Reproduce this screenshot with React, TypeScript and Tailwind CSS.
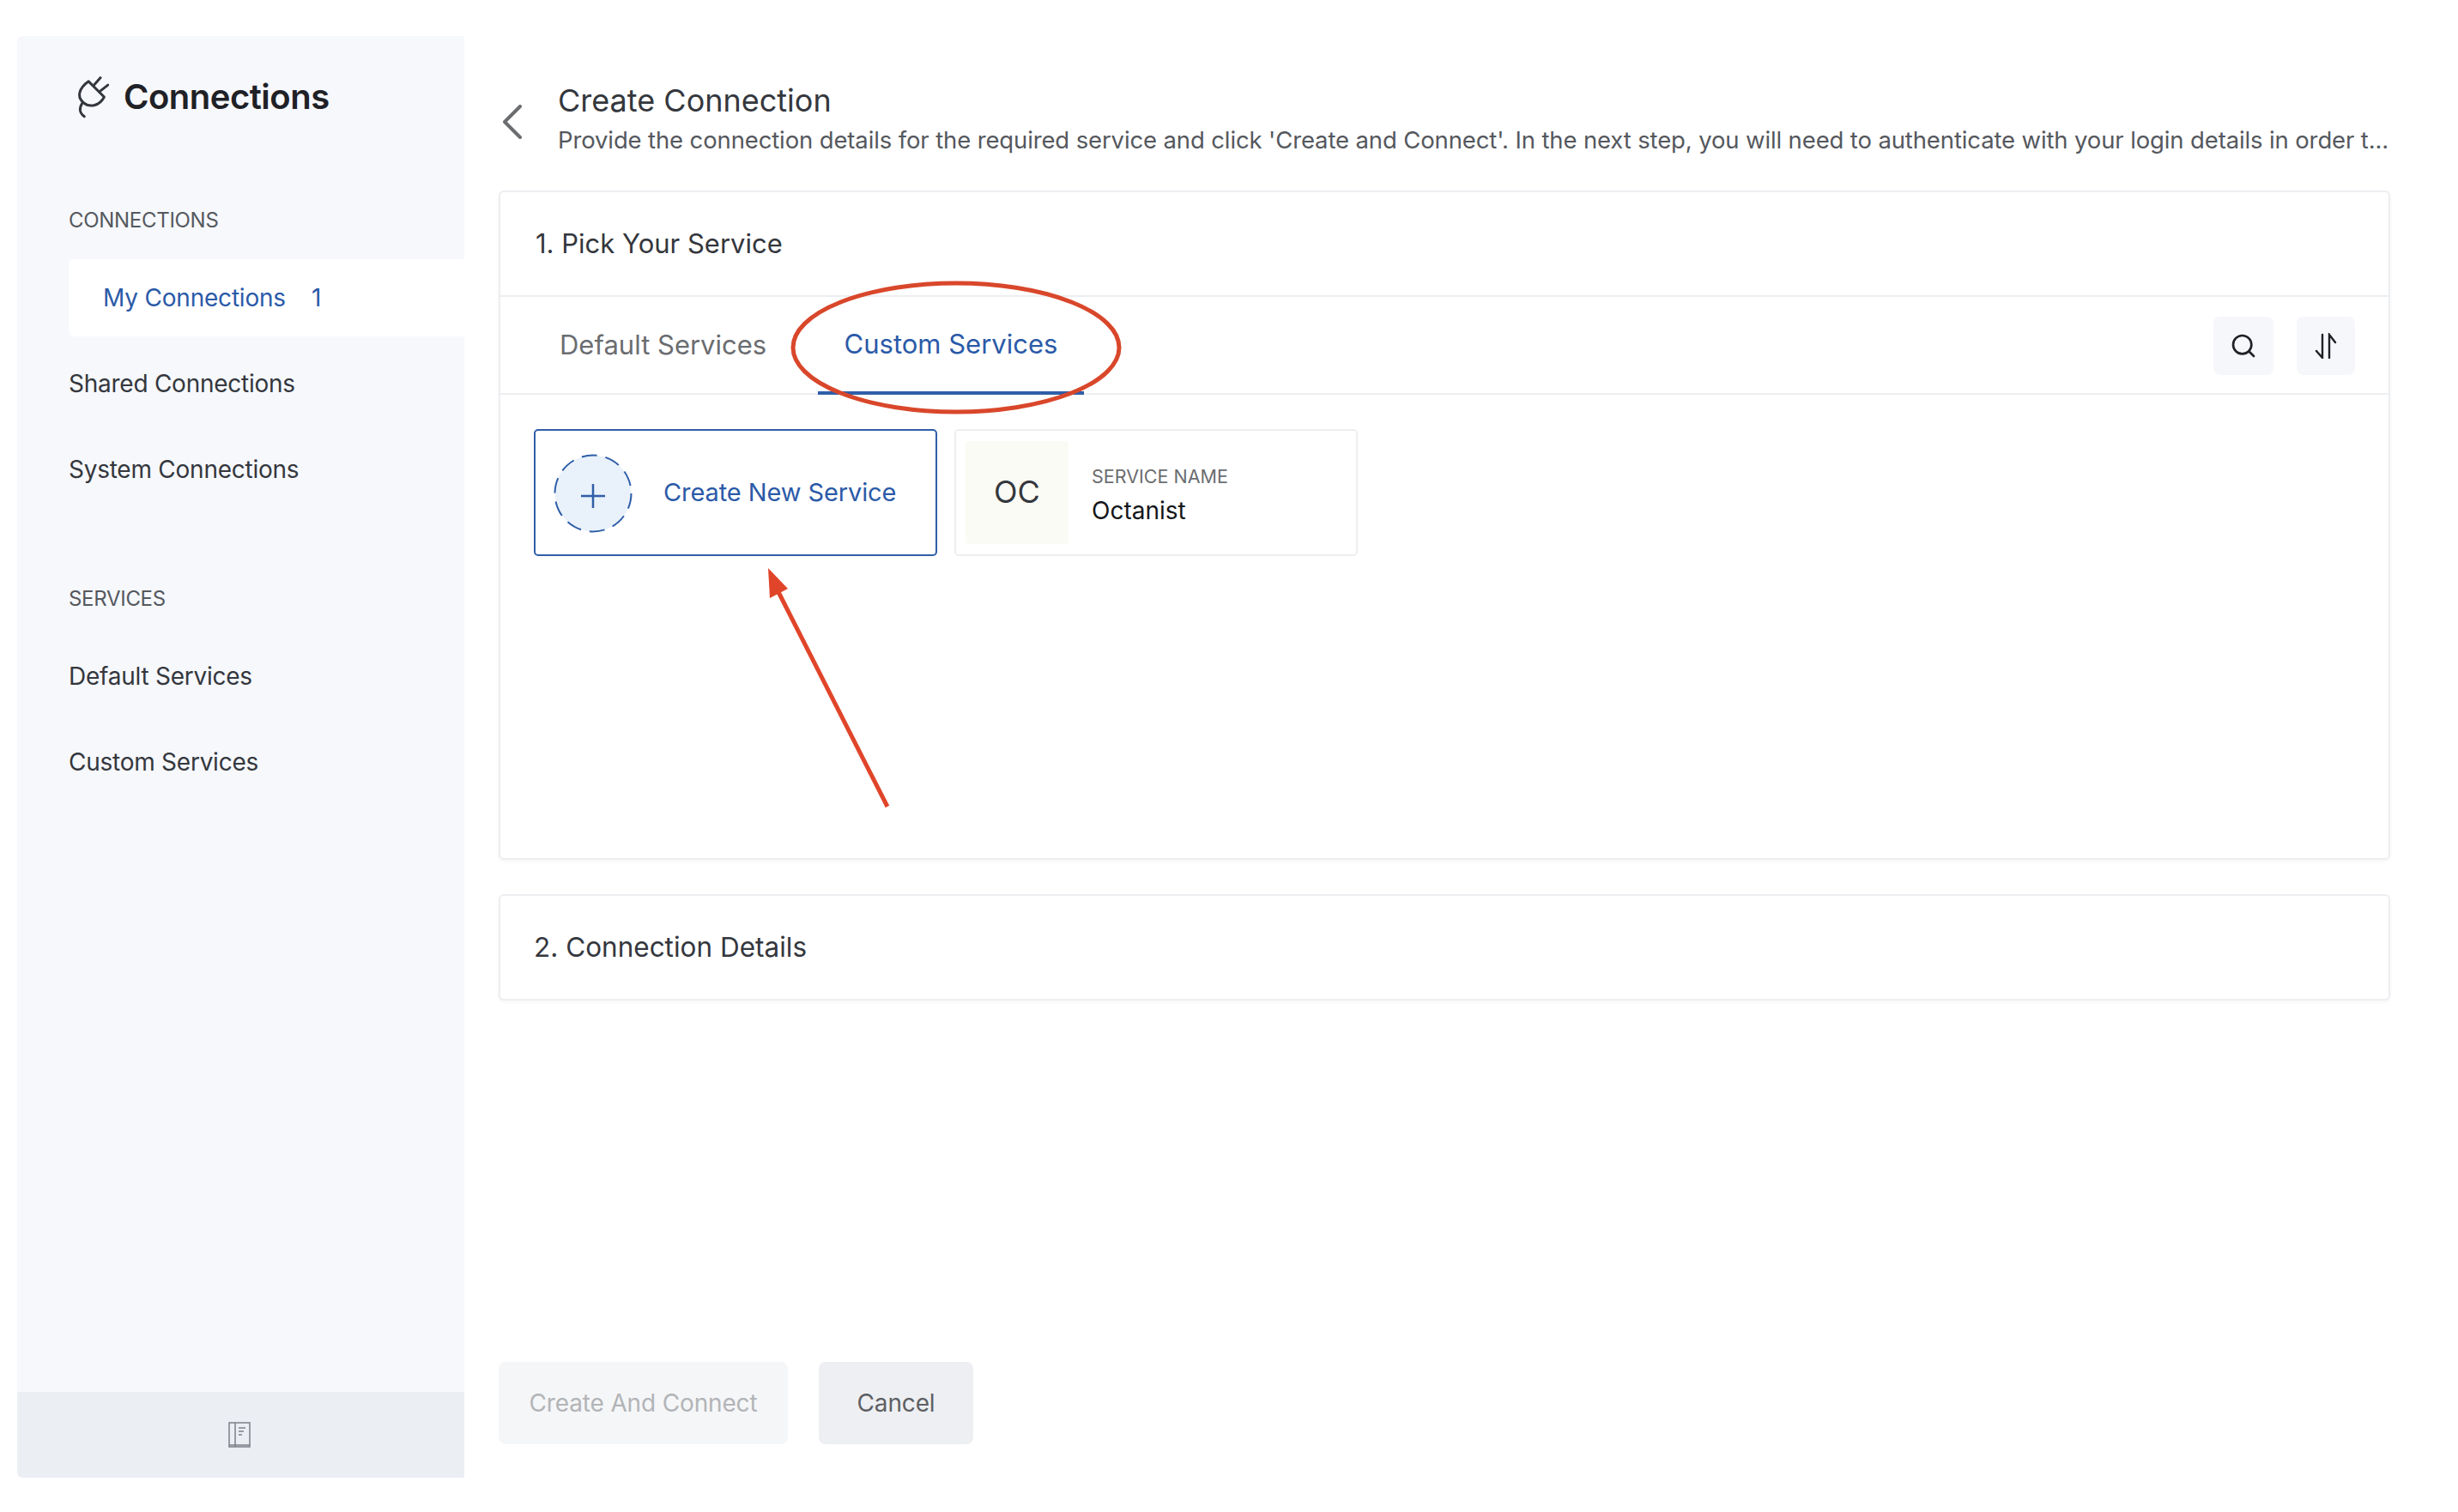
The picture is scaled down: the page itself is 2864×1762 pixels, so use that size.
import { Search } from 'lucide-react';

const font = { fontFamily: 'Inter, "Noto Sans", sans-serif' };

function PlugIcon() {
  return (
    <svg viewBox="90 80 115 150" className="w-[38px] h-[50px]" fill="none" stroke="#34373d" strokeWidth="9" strokeLinecap="round" strokeLinejoin="round">
      <path d="M130 100 L185 155 C170 185 135 195 112 175 C88 155 95 125 130 100 Z" />
      <path d="M150 112 L172 87 M170 135 L198 113" />
      <path d="M107 178 C96 195 98 212 115 224" />
    </svg>
  );
}

function SortIcon() {
  return (
    <svg viewBox="0 0 26 30" className="w-[26px] h-[30px]" fill="none" stroke="#1f2126" strokeWidth="2.4" strokeLinecap="round">
      <path d="M9 2 V29 L2 21" />
      <path d="M17 29 V2 L24 11" />
    </svg>
  );
}

function PanelIcon() {
  return (
    <svg viewBox="0 0 26 30" className="w-[26px] h-[30px] mr-[3px]" fill="none" stroke="#7d8187" strokeWidth="1.5">
      <rect x="1" y="1" width="24" height="28" />
      <path d="M8 1 V29 M1 27 H25" />
      <path d="M12 7 H20 M12 11 H18 M12 15 H16" />
    </svg>
  );
}

function DashedPlus() {
  return (
    <svg viewBox="0 0 92 92" className="w-[92px] h-[92px] mt-[2px]" fill="none" stroke="#2f5ea8">
      <circle cx="46" cy="46" r="44.5" fill="#e9f1fa" strokeWidth="2" strokeDasharray="18 10" />
      <path d="M46 35 V63 M32 49 H60" strokeWidth="2.5" />
    </svg>
  );
}

function SideItem({ label }: { label: string }) {
  return <div className="h-[100px] flex items-center pl-[60px] text-[28px] tracking-[-0.25px] text-[#34373d]">{label}</div>;
}

function SideHeading({ label }: { label: string }) {
  return <div className="pl-[60px] text-[24px] leading-[30px] tracking-[-0.3px] text-[#55585e]">{label}</div>;
}

function Sidebar() {
  return (
    <aside className="w-[521px] h-[1680px] shrink-0 bg-[#f6f8fc] rounded-tl-md rounded-bl-md flex flex-col">
      <div className="flex items-center gap-[16px] pl-[70px] pt-[22px] h-[120px]">
        <PlugIcon />
        <span className="text-[40px] font-semibold text-[#1f2126] tracking-[-0.5px]">Connections</span>
      </div>
      <div className="mt-[80px]">
        <SideHeading label="CONNECTIONS" />
      </div>
      <div className="ml-[60px] mt-[30px] h-[90px] bg-white rounded-l-md flex items-center pl-[40px] text-[28px] tracking-[-0.2px] text-[#2b5aa8]">
        <span>My Connections</span>
        <span className="ml-[30px]">1</span>
      </div>
      <div className="mt-[5px]">
        <SideItem label="Shared Connections" />
        <SideItem label="System Connections" />
      </div>
      <div className="mt-[86px] mb-[25px]">
        <SideHeading label="SERVICES" />
      </div>
      <SideItem label="Default Services" />
      <SideItem label="Custom Services" />
      <div className="mt-auto h-[100px] bg-[#ebeff4] rounded-bl-md flex items-center justify-center">
        <PanelIcon />
      </div>
    </aside>
  );
}

function Card({ children }: { children: React.ReactNode }) {
  return <section className="border-2 border-[#eceef1] rounded-md bg-white shadow-[0_2px_4px_rgba(0,0,0,0.04)]">{children}</section>;
}

function ServiceCards() {
  return (
    <div className="flex gap-[20px] px-[39px] pt-[40px]">
      <div className="w-[470px] h-[148px] border-2 border-[#2f5ea8] rounded-[5px] flex items-center pl-[21px]">
        <DashedPlus />
        <span className="ml-[36px] text-[29px] tracking-[-0.1px] text-[#2b5aa8]">Create New Service</span>
      </div>
      <div className="w-[470px] h-[148px] border-2 border-[#eceef1] rounded-[5px] flex items-center pl-[11px]">
        <div className="w-[120px] h-[120px] bg-[#fafbf4] rounded flex items-center justify-center text-[36px] text-[#34373d] pb-[2px]">OC</div>
        <div className="ml-[27px] flex flex-col pt-[3px]">
          <span className="text-[21.5px] leading-[30px] text-[#6b6d70]">SERVICE NAME</span>
          <span className="mt-[8px] text-[28px] leading-[34px] text-[#14161a]">Octanist</span>
        </div>
      </div>
    </div>
  );
}

function PickService() {
  return (
    <Card>
      <div className="h-[122px] flex items-center pl-[41px] text-[31px] text-[#34373d] border-b-2 border-[#eceef1]">1. Pick Your Service</div>
      <div className="h-[114px] flex items-stretch pl-[40px] pr-[39px] border-b-2 border-[#eceef1]">
        <div className="w-[330px] flex items-center pl-[29px] text-[31px] text-[#6b6d70]">Default Services</div>
        <div className="w-[310px] flex items-center justify-center text-[31px] text-[#2b5aa8] border-b-4 border-[#2f5ea8] -mb-[2px]">Custom Services</div>
        <div className="ml-auto flex items-center gap-[27px] pt-[2px]">
          <div className="w-[70px] h-[68px] rounded-lg bg-[#f6f7fb] flex items-center justify-center">
            <Search className="w-[32px] h-[32px] text-[#1f2126]" strokeWidth={2} />
          </div>
          <div className="w-[68px] h-[68px] rounded-lg bg-[#f6f7fb] flex items-center justify-center">
            <SortIcon />
          </div>
        </div>
      </div>
      <div className="h-[540px]">
        <ServiceCards />
      </div>
    </Card>
  );
}

export default function App() {
  return (
    <div style={font} className="relative w-[2864px] h-[1762px] bg-white pt-[42px] pl-[20px] flex overflow-hidden">
      <Sidebar />
      <main className="ml-[40px] w-[2204px] h-[1680px] flex flex-col">
        <header className="h-[180px] flex">
          <div className="w-[69px] shrink-0 pt-[80px] pl-[5px]">
            <svg viewBox="0 0 22 40" className="w-[22px] h-[40px]" fill="none" stroke="#6b6d70" strokeWidth="4" strokeLinecap="round" strokeLinejoin="round">
              <path d="M20 2 L2 20 L20 38" />
            </svg>
          </div>
          <div className="pt-[50px]">
            <h1 className="text-[36px] leading-[50px] text-[#34373d]">Create Connection</h1>
            <p className="text-[27.5px] leading-[42px] tracking-[-0.13px] text-[#55585e] whitespace-nowrap">
              Provide the connection details for the required service and click 'Create and Connect'. In the next step, you will need to authenticate with your login details in order t...
            </p>
          </div>
        </header>
        <PickService />
        <div className="mt-[40px]">
          <Card>
            <div className="h-[120px] flex items-center pl-[39px] text-[31.5px] text-[#34373d]">2. Connection Details</div>
          </Card>
        </div>
        <div className="mt-auto mb-[39px] flex gap-[36px]">
          <button className="w-[337px] h-[96px] rounded-lg bg-[#f5f6f8] text-[28px] tracking-[-0.15px] text-[#b2b4b7]">Create And Connect</button>
          <button className="w-[180px] h-[96px] rounded-lg bg-[#edeff3] text-[28px] tracking-[-0.15px] text-[#5d5f63]">Cancel</button>
        </div>
      </main>
      {/* red annotation drawn on top of the screenshot */}
      <svg className="absolute left-0 top-0 pointer-events-none" width="2864" height="1762" fill="none">
        <ellipse cx="1114" cy="405" rx="190" ry="75" stroke="#d9472b" strokeWidth="5" />
        <path d="M1034 940 L904 684" stroke="#e0452a" strokeWidth="5" />
        <path d="M895 662 L918 686 L897 697 Z" fill="#e0452a" />
      </svg>
    </div>
  );
}
